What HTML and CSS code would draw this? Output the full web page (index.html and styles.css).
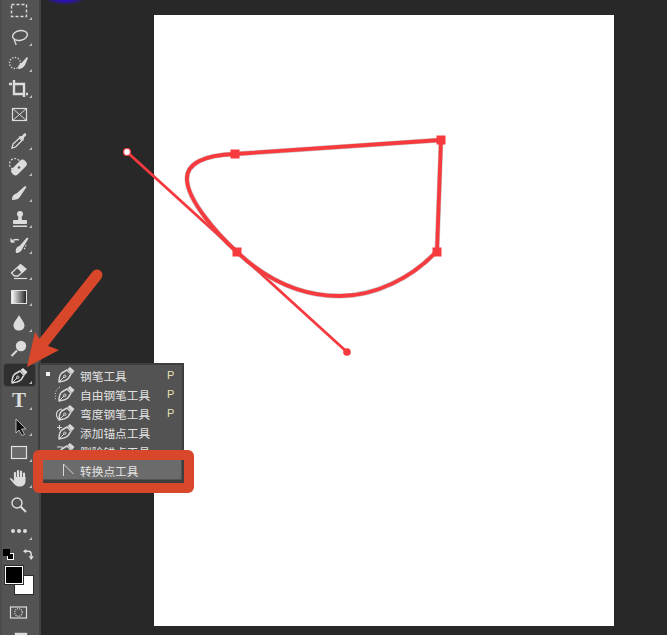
FILE: index.html
```html
<!DOCTYPE html>
<html lang="zh-CN">
<head>
  <meta charset="UTF-8">
  <title>转换点工具</title>
  <link rel="stylesheet" href="styles.css">
</head>
<body>
  <svg class="defs" width="0" height="0">
    <symbol id="pen" viewBox="0 0 26 26">
      <path d="M6 22 C6 18 7 14.5 8.8 13 L14 10 L18 14 L15 18.8 C13 20.5 10 21.5 6 22 Z" fill="none" stroke="currentColor" stroke-width="1.5" stroke-linejoin="round"/>
      <path d="M6 22 L11 17" stroke="currentColor" stroke-width="1"/>
      <circle cx="11.8" cy="16.2" r="1.2" fill="none" stroke="currentColor"/>
      <path d="M14.5 9 L17 7 L21.5 11 L19 14 Z" fill="currentColor"/>
    </symbol>
    <symbol id="brush" viewBox="0 0 26 26">
      <path d="M6 21 C6 17 8 15 10.5 14.5 L19 7 L20.5 8 L14.5 17 C13 20 10 21 6 21 Z" fill="currentColor"/>
    </symbol>
    <linearGradient id="grad">
      <stop offset="0" stop-color="#fff"/>
      <stop offset="1" stop-color="#222"/>
    </linearGradient>
  </svg>

  <div class="glow"></div>

  <div class="toolbar">
    <div class="tool more"><svg viewBox="0 0 26 26"><rect x="5.5" y="7.5" width="15" height="12" fill="none" stroke="currentColor" stroke-width="1.4" stroke-dasharray="3 2"/></svg></div>
    <div class="tool more"><svg viewBox="0 0 26 26"><ellipse cx="14" cy="12.5" rx="7.5" ry="4.8" transform="rotate(-12 14 12.5)" fill="none" stroke="currentColor" stroke-width="1.4"/><path d="M9 16 C7 18 10 19 10 22" fill="none" stroke="currentColor" stroke-width="1.4"/></svg></div>
    <div class="tool more"><svg viewBox="0 0 26 26"><circle cx="9" cy="14" r="5.5" fill="none" stroke="currentColor" stroke-width="1.3" stroke-dasharray="1.3 1.5"/><path d="M12 20 C12 17 13 15 15 14.5 L21 8 L22 9 L19 16 C17 19 15 20 12 20 Z" fill="currentColor"/></svg></div>
    <div class="tool more"><svg viewBox="0 0 26 26"><path d="M3 9 H6 M8 5 V19 H18 M8 9 H18 V22 M20 19 H22" fill="none" stroke="currentColor" stroke-width="2.4"/></svg></div>
    <div class="tool"><svg viewBox="0 0 26 26"><rect x="6.5" y="7.5" width="14" height="12" fill="none" stroke="currentColor" stroke-width="1.2"/><path d="M6.5 7.5 L20.5 19.5 M20.5 7.5 L6.5 19.5" stroke="currentColor"/></svg></div>
    <div class="tool more"><svg viewBox="0 0 26 26"><path d="M6 21 L7 17 L13.5 11 L16 13.5 L9.5 20 Z" fill="none" stroke="currentColor" stroke-width="1.3"/><path d="M12.5 9.5 L16 9 L18 6.5 C19.5 5.8 20.8 7 20 8.5 L18 10.5 L17.5 14 Z" fill="currentColor"/></svg></div>
    <div class="tool more"><svg viewBox="0 0 26 26"><circle cx="9" cy="11" r="5.5" fill="none" stroke="currentColor" stroke-width="1.2" stroke-dasharray="2 1.5"/><rect x="9" y="5.5" width="8" height="18" rx="3.5" transform="rotate(45 13 14.5)" fill="currentColor"/><circle cx="13" cy="14.5" r="1.2" fill="#535353"/></svg></div>
    <div class="tool more"><svg><use href="#brush"/></svg></div>
    <div class="tool more"><svg viewBox="0 0 26 26"><circle cx="14" cy="9" r="3" fill="currentColor"/><path d="M12.5 11 H15.5 L16 15 H12 Z" fill="currentColor"/><rect x="7" y="15" width="14" height="4" rx="1" fill="currentColor"/><rect x="7" y="20.5" width="14" height="1.5" fill="currentColor"/></svg></div>
    <div class="tool more"><svg viewBox="0 0 26 26"><path d="M10 22 C9 18 11 15.5 13.5 15 L21 6.5 L22.5 7.5 L17 16.5 C16 20 13.5 22 10 22 Z" fill="currentColor"/><path d="M5 11 C7 8.5 10 8 13 9 M5 11 V7.5 M5 11 H8.5" fill="none" stroke="currentColor" stroke-width="1.3"/><path d="M20 14 L18 19" stroke="currentColor" stroke-width="1.2" stroke-dasharray="1.5 1.5"/></svg></div>
    <div class="tool more"><svg viewBox="0 0 26 26"><path d="M5.5 16 L14.5 7.5 L20 12 L12 19 H8.5 Z" fill="none" stroke="currentColor" stroke-width="1.3"/><path d="M11 11 L14.5 7.5 L20 12 L16 16 Z" fill="currentColor"/><path d="M8 21.5 H21" stroke="currentColor" stroke-width="1.2"/></svg></div>
    <div class="tool more"><svg viewBox="0 0 26 26"><rect x="5.5" y="7.5" width="15" height="13" fill="url(#grad)" stroke="#e4e4e4"/></svg></div>
    <div class="tool more"><svg viewBox="0 0 26 26"><path d="M13 6 C15 10 18.5 13 18.5 16.5 C18.5 19.5 16 21.5 13 21.5 C10 21.5 7.5 19.5 7.5 16.5 C7.5 13 11 10 13 6 Z" fill="currentColor"/></svg></div>
    <div class="tool more"><svg viewBox="0 0 26 26"><circle cx="15" cy="11" r="5.2" fill="currentColor"/><path d="M11 15.5 L5.5 21" stroke="currentColor" stroke-width="2"/></svg></div>
    <div class="tool more active"><svg><use href="#pen"/></svg></div>
    <div class="tool more"><span class="type-t">T</span></div>
    <div class="tool more"><svg viewBox="0 0 26 26"><path d="M10 6 L20 16 H15.5 L18.5 21.5 L16 22.5 L13 17 L10 20 Z" fill="#111" stroke="#d8d8d8" stroke-width="0.8"/></svg></div>
    <div class="tool more"><svg viewBox="0 0 26 26"><rect x="5.5" y="7.5" width="15" height="12" fill="#6a6a6a" stroke="#e0e0e0" stroke-width="1.2"/></svg></div>
    <div class="tool more"><svg viewBox="0 0 26 26"><path d="M9 14 V8 M12 13 V6 M15 13 V6.5 M18 14 V8.5" stroke="currentColor" stroke-width="2.2" stroke-linecap="round"/><path d="M3.5 13.5 C5 12.5 6.5 14 8 16 V12 H19.5 V16 C19.5 19 17.5 21.5 14 21.5 C10 21.5 8.5 19.5 6.5 17 Z" fill="currentColor"/></svg></div>
    <div class="tool"><svg viewBox="0 0 26 26"><circle cx="11" cy="12" r="5" fill="none" stroke="currentColor" stroke-width="1.4"/><path d="M14.5 15.5 L20 21" stroke="currentColor" stroke-width="2"/></svg></div>
    <div class="tool more"><svg viewBox="0 0 26 26"><circle cx="7" cy="14" r="2" fill="currentColor"/><circle cx="13" cy="14" r="2" fill="currentColor"/><circle cx="19" cy="14" r="2" fill="currentColor"/></svg></div>

    <div class="swatches">
      <div class="mini mini-bg"></div>
      <div class="mini mini-fg"></div>
      <svg class="swap" viewBox="0 0 12 12"><path d="M3 2.5 H6 C8.5 2.5 9 4 9 6.5 V8" fill="none" stroke="#e0e0e0" stroke-width="1.6"/><path d="M0 2.5 L3.5 0 V5 Z M9 12 L6.2 8 H11.8 Z" fill="#e0e0e0"/></svg>
      <div class="swatch swatch-bg"></div>
      <div class="swatch swatch-fg"></div>
    </div>

    <div class="tool"><svg viewBox="0 0 26 26"><rect x="4.5" y="8" width="16" height="11" fill="none" stroke="currentColor" stroke-width="1.2"/><circle cx="12.5" cy="13.5" r="3.8" fill="none" stroke="currentColor" stroke-width="1.2" stroke-dasharray="1 1"/></svg></div>
    <div class="tool"><svg viewBox="0 0 26 26"><rect x="9.5" y="8.5" width="11" height="12" fill="none" stroke="currentColor" stroke-width="1.4"/><path d="M9.5 10 H20.5" stroke="currentColor" stroke-width="2"/></svg></div>
  </div>

  <div class="page"></div>

  <svg class="path-overlay" viewBox="0 0 667 635">
    <path class="handle" d="M127 152 L347 352"/>
    <path class="curve-shade" d="M441 140 L235 154 C205 155 186 163 187 180 C188 200 215 232 237 252 C270 283 305 296 340 296 C375 296 412 278 437 251 Z"/>
    <path class="curve" d="M441 140 L235 154 C205 155 186 163 187 180 C188 200 215 232 237 252 C270 283 305 296 340 296 C375 296 412 278 437 251 Z"/>
    <rect class="anchor" x="230.5" y="149.5" width="9" height="9"/>
    <rect class="anchor" x="436.5" y="135.5" width="9" height="9"/>
    <rect class="anchor" x="232.5" y="247.5" width="9" height="9"/>
    <rect class="anchor" x="432.5" y="247.5" width="9" height="9"/>
    <circle cx="127" cy="152" r="3.5" fill="#fff" stroke="#f5393f" stroke-width="1.2"/>
    <circle cx="347" cy="352" r="3.8" fill="#f5393f"/>
  </svg>

  <div class="flyout">
    <div class="fly-row"><span class="bullet"></span><svg class="fly-icon"><use href="#pen"/></svg><span class="fly-label">钢笔工具</span><span class="fly-key">P</span></div>
    <div class="fly-row"><span></span><svg class="fly-icon" viewBox="0 0 26 26"><use href="#pen" width="26" height="26"/><path d="M7 8 C3 10 1 15 3 22" fill="none" stroke="currentColor" stroke-dasharray="1 1.6"/></svg><span class="fly-label">自由钢笔工具</span><span class="fly-key">P</span></div>
    <div class="fly-row"><span></span><svg class="fly-icon" viewBox="0 0 26 26"><use href="#pen" width="26" height="26"/><path d="M9 11 C3 12 2 17 5 21 C6 21 7 20.5 8 20" fill="none" stroke="currentColor" stroke-width="1.2"/></svg><span class="fly-label">弯度钢笔工具</span><span class="fly-key">P</span></div>
    <div class="fly-row"><span></span><svg class="fly-icon" viewBox="0 0 26 26"><use href="#pen" width="26" height="26"/><path d="M4 10.5 H9 M6.5 8 V13" stroke="currentColor"/></svg><span class="fly-label">添加锚点工具</span></div>
    <div class="fly-row"><span></span><svg class="fly-icon" viewBox="0 0 26 26"><use href="#pen" width="26" height="26"/><path d="M4 11 H10" stroke="currentColor"/></svg><span class="fly-label">删除锚点工具</span></div>
    <div class="fly-row selected"><span></span><svg class="fly-icon" viewBox="0 0 26 26"><path d="M10.5 9 V21 M10.5 9 L20.5 19" fill="none" stroke="currentColor"/></svg><span class="fly-label">转换点工具</span></div>
  </div>

  <div class="callout"></div>

  <svg class="arrow" viewBox="0 0 667 635">
    <path class="arrow-shaft" d="M97 275 L40 347"/>
    <path class="arrow-head" d="M27 367 L35 332 L43 344 L59 350 Z"/>
  </svg>
</body>
</html>
```

FILE: styles.css
```css
html, body { margin: 0; height: 100%; }
body {
  background-color: #282828;
  color: #dcdcdc;
  font-family: "Noto Sans CJK SC", "Liberation Sans", sans-serif;
  position: relative;
  width: 667px;
  height: 635px;
  overflow: hidden;
}
.defs { position: absolute; }

.glow {
  position: absolute;
  left: 43px;
  top: -12px;
  width: 44px;
  height: 17px;
  border-radius: 50%;
  background: radial-gradient(closest-side, #3010e0 0%, #2a12b0 55%, #282828 100%);
}

/* toolbar */
.toolbar {
  width: 39px;
  height: 635px;
  background-color: #535353;
  border-right: 2px solid #424242;
  box-shadow: inset 2px 0 0 #4b4b4b;
  display: flex;
  flex-direction: column;
  overflow: hidden;
}
.tool {
  flex: none;
  height: 26px;
  padding-left: 6px;
  box-sizing: border-box;
  display: flex;
  align-items: center;
  position: relative;
  color: #dcdcdc;
}
.tool:first-child { margin-top: -3px; }
.tool svg { width: 26px; height: 26px; flex: none; }
.tool.more::after {
  content: "";
  position: absolute;
  left: 29px;
  bottom: 3px;
  border-left: 3px solid transparent;
  border-bottom: 3px solid #bdbdbd;
}
.tool.active::before {
  content: "";
  position: absolute;
  left: 3px;
  right: 3px;
  top: 2px;
  bottom: 0;
  background-color: #2f2f2f;
  border: 1px solid #474747;
  border-radius: 4px;
  box-sizing: border-box;
}
.tool.active svg { position: relative; }
.type-t {
  font-family: "Liberation Serif", serif;
  font-weight: bold;
  font-size: 21px;
  width: 26px;
  text-align: center;
  line-height: 26px;
}

/* colours */
.swatches { flex: none; height: 56px; position: relative; }
.mini { position: absolute; box-sizing: border-box; }
.mini-bg { left: 7px; top: 10px; width: 7px; height: 7px; background: #000; border: 1px solid #fff; }
.mini-fg { left: 3px; top: 6px; width: 7px; height: 7px; background: #000; }
.swap { position: absolute; left: 23px; top: 6px; width: 11px; height: 11px; }
.swatch { position: absolute; box-sizing: border-box; }
.swatch-bg { left: 14px; top: 32px; width: 20px; height: 20px; background: #fff; border: 1px solid #2b2b2b; }
.swatch-fg { left: 5px; top: 23px; width: 18px; height: 18px; background: #000; border: 1px solid #fff; outline: 1px solid #2b2b2b; }

/* document */
.page {
  position: absolute;
  left: 154px;
  top: 15px;
  width: 460px;
  height: 611px;
  background-color: #fff;
}
.path-overlay, .arrow {
  position: absolute;
  left: 0;
  top: 0;
  width: 667px;
  height: 635px;
  pointer-events: none;
}
.handle { stroke: #f5393f; stroke-width: 2.8; fill: none; }
.curve-shade { stroke: #8a8a8a; stroke-width: 5; fill: none; opacity: 0.45; }
.curve { stroke: #f73a3e; stroke-width: 3.8; fill: none; }
.anchor { fill: #f73a3e; }

/* pen flyout */
.flyout {
  position: absolute;
  left: 38px;
  top: 363px;
  width: 146px;
  height: 121px;
  box-sizing: border-box;
  padding: 0 2px;
  background-color: #535353;
  border: 2px solid #3e3e3e;
  border-bottom: 0;
  box-shadow: inset 0 -4px 0 #3e3e3e;
}
.fly-row {
  height: 19px;
  display: grid;
  grid-template-columns: 16px 18px 87px 12px;
  align-items: center;
  font-size: 11.7px;
  color: #e2e2e2;
  line-height: 19px;
  padding-left: 2px;
}
.bullet { width: 4px; height: 4px; background: #f0f0f0; margin-left: 2px; margin-top: -3px; }
.fly-icon { width: 26px; height: 26px; margin: -5px 0 0 -7px; color: #d8d8d8; }
.fly-label { padding-left: 2px; white-space: nowrap; }
.fly-key { font-family: "Liberation Sans", sans-serif; color: #e6e0b4; font-size: 11px; padding-left: 2px; }
.selected { background-color: #6b6b6b; margin-right: -1px; }

/* annotation */
.callout {
  position: absolute;
  left: 33px;
  top: 450px;
  width: 161px;
  height: 43px;
  box-sizing: border-box;
  border: 10px solid #d9472b;
  border-radius: 6px;
}
.arrow-shaft { stroke: #d9472b; stroke-width: 11; stroke-linecap: round; fill: none; }
.arrow-head { fill: #d9472b; }
```
